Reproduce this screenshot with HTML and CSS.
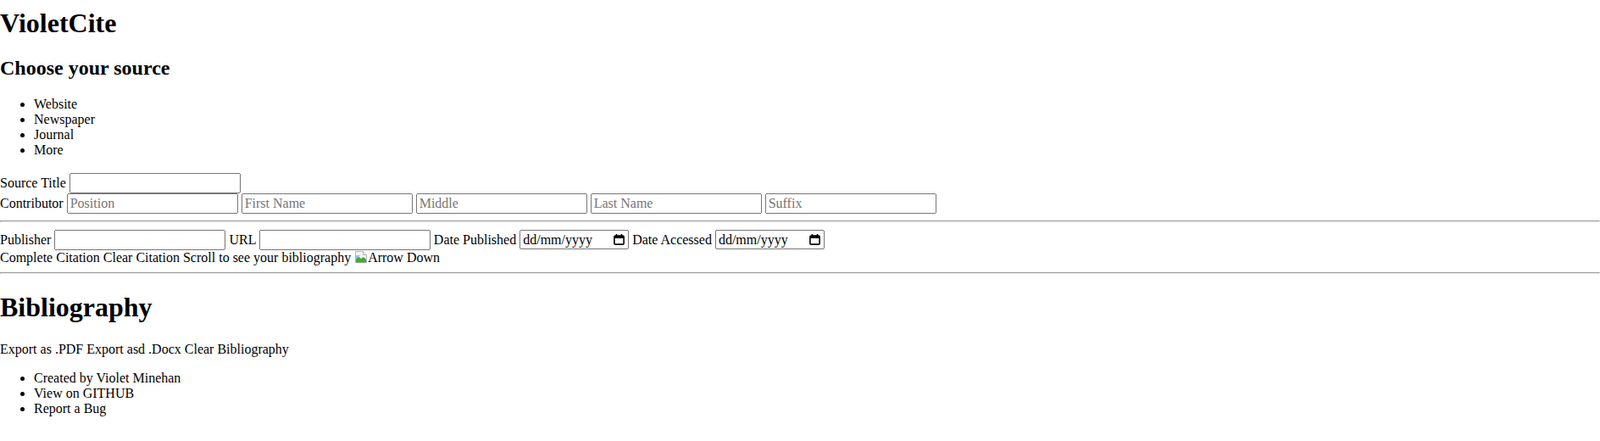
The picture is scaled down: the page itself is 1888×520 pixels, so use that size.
FILE: index.html
```html
<!DOCTYPE html>
<html lang="en">
<head>
<meta charset="utf-8">
<title>VioletCite</title>
<link rel="stylesheet" href="styles.css">
</head>
<body>
<header>
  <h1 class="title">VioletCite</h1>
</header>
<main>
  <section class="sources">
    <h2>Choose your source</h2>
    <ul>
      <li>Website</li>
      <li>Newspaper</li>
      <li>Journal</li>
      <li>More</li>
    </ul>
  </section>
  <form class="citation">
    <div class="row">
      <label>Source Title</label> <input type="text" class="field">
    </div>
    <div class="row">
      <label>Contributor</label> <input type="text" class="field" placeholder="Position"> <input type="text" class="field" placeholder="First Name"> <input type="text" class="field" placeholder="Middle"> <input type="text" class="field" placeholder="Last Name"> <input type="text" class="field" placeholder="Suffix">
    </div>
    <hr class="rule">
    <div class="row">
      <label>Publisher</label> <input type="text" class="field"> <label>URL</label> <input type="text" class="field"> <label>Date Published</label> <span class="datefield"><input type="text" class="datetext" placeholder="dd/mm/yyyy"><svg class="cal" width="13" height="13" viewBox="0 0 13 13"><path d="M3.5 0v2.5M9.5 0v2.5" stroke="#000" stroke-width="1.6"/><rect x="0.9" y="2" width="11.2" height="10.1" rx="1.2" fill="none" stroke="#000" stroke-width="1.6"/><rect x="0.9" y="2" width="11.2" height="3" fill="#000"/></svg></span> <label>Date Accessed</label> <span class="datefield"><input type="text" class="datetext" placeholder="dd/mm/yyyy"><svg class="cal" width="13" height="13" viewBox="0 0 13 13"><path d="M3.5 0v2.5M9.5 0v2.5" stroke="#000" stroke-width="1.6"/><rect x="0.9" y="2" width="11.2" height="10.1" rx="1.2" fill="none" stroke="#000" stroke-width="1.6"/><rect x="0.9" y="2" width="11.2" height="3" fill="#000"/></svg></span>
    </div>
    <div class="row">
      <span>Complete Citation</span> <span>Clear Citation</span> <span>Scroll to see your bibliography</span> <span class="broken"><svg width="16" height="16" viewBox="0 0 16 16"><path d="M1.5 1.5h9l4 4v9h-13z" fill="#f4f4f4" stroke="#b5b5b5"/><path d="M10.5 1.5v4h4" fill="#e6e6e6" stroke="#b5b5b5"/><path d="M2 14.5v-4l3-3 3 2.5 3-2 3 3v3.5z" fill="#4aa53c"/><path d="M2 6h6l-3 1.5-3 3z" fill="#8cc4ea"/></svg>Arrow Down</span>
    </div>
  </form>
  <hr class="rule">
  <section class="bibliography">
    <h1>Bibliography</h1>
    <p><span>Export as .PDF</span> <span>Export asd .Docx</span> <span>Clear Bibliography</span></p>
  </section>
</main>
<footer>
  <ul>
    <li>Created by Violet Minehan</li>
    <li>View on GITHUB</li>
    <li>Report a Bug</li>
  </ul>
</footer>
</body>
</html>
```

FILE: styles.css
```css
body {
  margin: 0;
  font-family: "Liberation Serif", "Times New Roman", serif;
  font-size: 16px;
  color: #000;
  background: #fff;
}
.title {
  margin-top: 8.5px;
}
.citation {
  padding-top: 2px;
}
.rule {
  margin-bottom: 9px;
}
.field {
  box-sizing: border-box;
  width: 202px;
  height: 24px;
  font-family: "Liberation Serif", "Times New Roman", serif;
  font-size: 16px;
}
.datefield {
  display: inline-flex;
  align-items: center;
  box-sizing: border-box;
  width: 129px;
  height: 23px;
  padding: 0 4px 0 3px;
  border: 1px solid #767676;
  border-radius: 2px;
  background: #fff;
}
.datetext {
  flex: 1;
  min-width: 0;
  border: 0;
  padding: 0;
  outline: none;
  background: transparent;
  font-family: "Liberation Serif", "Times New Roman", serif;
  font-size: 16px;
  color: #000;
}
.datetext::placeholder {
  color: #000;
  opacity: 1;
}
.cal {
  flex: none;
}
.broken svg {
  vertical-align: -2px;
}
```
